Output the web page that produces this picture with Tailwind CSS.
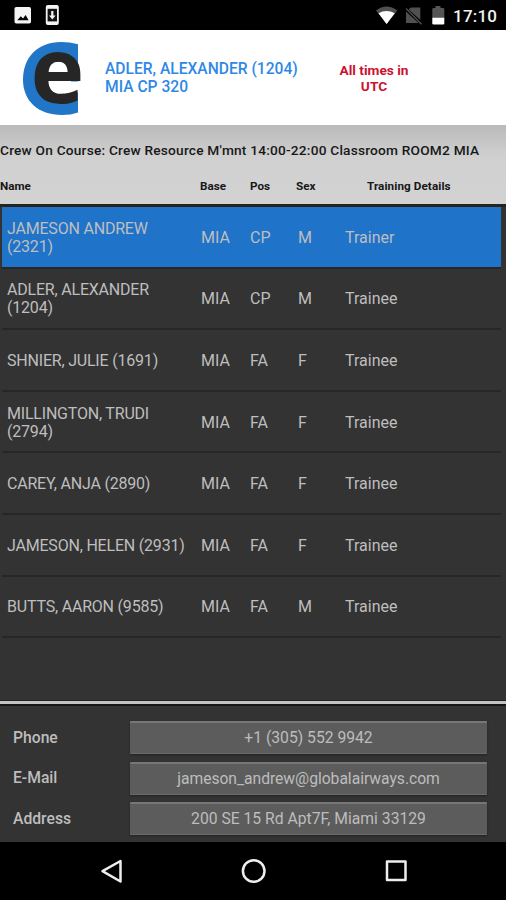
<!DOCTYPE html>
<html lang="en">
<head>
  <meta charset="UTF-8">
  <meta name="viewport" content="width=device-width, initial-scale=1.0">
  <title>Crew On Course</title>
  <script src="https://cdn.jsdelivr.net/npm/@tailwindcss/browser@4"></script>
</head>
<body class="bg-black font-[Roboto,sans-serif]">
  <div class="w-[506px] h-[900px] flex flex-col overflow-hidden bg-[#333333]">

    <!-- Status bar -->
    <div class="h-[30px] shrink-0 bg-black flex items-center">
      <svg class="w-full h-[30px]" viewBox="0 0 506 30">
        <rect x="14.5" y="7" width="16.5" height="16.5" rx="1.8" fill="#f4f4f4"/>
        <path d="M17.3 20.2l3.5-4 2.2 2.2 2.6-3.4 3 5.2z" fill="#000"/>
        <rect x="45.8" y="5" width="13" height="20" rx="2" fill="#f4f4f4"/>
        <rect x="47.6" y="8.8" width="9.4" height="12.6" fill="#111"/>
        <path d="M51.2 11h2.2v4.5h2.2L52.3 19.5 49 15.5h2.2z" fill="#f4f4f4"/>
        <path d="M376 10.5Q386.500 2.500 397.300 10.5L386.600 24z" fill="#505050"/>
        <path d="M378.500 13.300Q386.500 8.500 394.800 13.300L386.600 24z" fill="#fff"/>
        <path d="M411 7.5h9.300V20L408.500 9.500zM406 11.500L418.500 23H406z" fill="#505050"/>
        <path d="M406 8.500L421.500 24.300" stroke="#505050" stroke-width="1.300"/>
        <path d="M435.500 6h5v2h2.500q1.300 0 1.300 1.300V18h-12V9.300q0-1.300 1.300-1.300h1.900z" fill="#555"/>
        <path d="M432.300 17.700h12v5.600q0 1.200-1.200 1.200h-9.600q-1.200 0-1.200-1.200z" fill="#fff"/>
        <text x="453" y="22" font-size="17" font-weight="500" fill="#f2f2f2" textLength="44">17:10</text>
      </svg>
    </div>

    <!-- Header -->
    <div class="h-[95px] shrink-0 bg-white flex">
      <svg class="w-[105px] h-[95px] shrink-0 overflow-visible" viewBox="0 30 105 95">
        <path d="M78 44.300Q70 42 61 42C38 42 23 57 23 79.500C23 101 38 115 62 115Q71 115 78 112.500z" fill="#2176c8"/>
        <path d="M47 62h24v19.500h11v9l-14 6-19-2z" fill="#fff"/>
        <text x="30.500" y="103" font-family="Open Sans" font-weight="700" font-size="91" fill="#262626">e</text>
      </svg>
      <div class="w-[215px] pt-[30px] text-[15.6px] leading-[18px] font-medium text-[#2f88e6]">
        <p class="whitespace-nowrap">ADLER, ALEXANDER (1204)</p>
        <p>MIA CP 320</p>
      </div>
      <p class="w-[108px] pt-[32px] text-center text-[13.7px] leading-4 font-bold text-[#cc1230]">All times in<br>UTC</p>
    </div>

    <!-- Course title and column names -->
    <div class="h-[79px] shrink-0 bg-linear-to-b from-[#bababa] via-[#d0d0d0] via-40% to-[#d3d3d3] text-[#181818] font-medium">
      <p class="pt-[16px] text-[13.7px] leading-[18px] whitespace-nowrap tracking-[0.21px]">Crew On Course: Crew Resource M'mnt 14:00-22:00 Classroom ROOM2 MIA</p>
      <div class="flex pt-[19px] text-[11.7px] leading-4 font-bold">
        <span class="w-[200px]">Name</span>
        <span class="w-[50px]">Base</span>
        <span class="w-[46px]">Pos</span>
        <span class="w-[71px]">Sex</span>
        <span class="whitespace-nowrap tracking-[0.08px]">Training Details</span>
      </div>
    </div>

    <!-- Crew list -->
    <div id="crew" class="h-[496px] shrink-0 border-t-3 border-[#26241f] pl-[2px] pr-[5px] text-[16px] leading-[18px] text-[#bebebe]"></div>

    <!-- Divider -->
    <div class="h-[6px] shrink-0 bg-[#c2c2c2] border-t border-b-2 border-t-[#222] border-b-[#151515]"></div>

    <!-- Contact details -->
    <div class="h-[136px] shrink-0 pt-[15px] pl-[13px] pr-[19px] flex flex-col gap-[7.5px] text-[15.7px] text-[#bdbdbd]">
      <div class="flex h-[33px] items-center">
        <span class="w-[117px] font-medium">Phone</span>
        <span class="flex-1 h-full bg-[#5c5c5c] border-t-2 border-t-[#777] border-b border-b-[#6a6a6a] rounded-[1px] shadow-[0_1px_2px_#222] flex items-center justify-center">+1 (305) 552 9942</span>
      </div>
      <div class="flex h-[33px] items-center">
        <span class="w-[117px] font-medium">E-Mail</span>
        <span class="flex-1 h-full bg-[#5c5c5c] border-t-2 border-t-[#777] border-b border-b-[#6a6a6a] rounded-[1px] shadow-[0_1px_2px_#222] flex items-center justify-center tracking-[-0.04px]">jameson_andrew@globalairways.com</span>
      </div>
      <div class="flex h-[33px] items-center">
        <span class="w-[117px] font-medium">Address</span>
        <span class="flex-1 h-full bg-[#5c5c5c] border-t-2 border-t-[#777] border-b border-b-[#6a6a6a] rounded-[1px] shadow-[0_1px_2px_#222] flex items-center justify-center">200 SE 15 Rd Apt7F, Miami 33129</span>
      </div>
    </div>

    <!-- Navigation bar -->
    <div class="h-[58px] shrink-0 bg-black">
      <svg class="w-full h-[58px]" viewBox="0 842 506 58" fill="none" stroke="#eee" stroke-width="2.5" stroke-linejoin="round">
        <path d="M120.500 861V881.500L102.500 871.200z"/>
        <circle cx="253.700" cy="871" r="10.800"/>
        <rect x="387" y="861.500" width="18.500" height="18.500"/>
      </svg>
    </div>
  </div>

  <script>
    const crew = [
      ["JAMESON ANDREW<br>(2321)", "CP", "M", "Trainer"],
      ["ADLER, ALEXANDER<br>(1204)", "CP", "M", "Trainee"],
      ["SHNIER, JULIE (1691)", "FA", "F", "Trainee"],
      ["MILLINGTON, TRUDI<br>(2794)", "FA", "F", "Trainee"],
      ["CAREY, ANJA (2890)", "FA", "F", "Trainee"],
      ["JAMESON, HELEN (2931)", "FA", "F", "Trainee"],
      ["BUTTS, AARON (9585)", "FA", "M", "Trainee"]
    ];

    // The first crew member is the selected one
    document.getElementById("crew").innerHTML = crew.map(([name, pos, sex, details], i) => `
      <div class="flex items-center h-[61.6px] pt-[2px] pl-[5px] border-b-2 border-[#272727] ${i === 0 ? "bg-[#1f73c9]" : ""}">
        <span class="w-[194px] whitespace-nowrap tracking-[-0.2px]">${name}</span>
        <span class="w-[49px]">MIA</span>
        <span class="w-[48px]">${pos}</span>
        <span class="w-[47px]">${sex}</span>
        <span>${details}</span>
      </div>`).join("");
  </script>
</body>
</html>
